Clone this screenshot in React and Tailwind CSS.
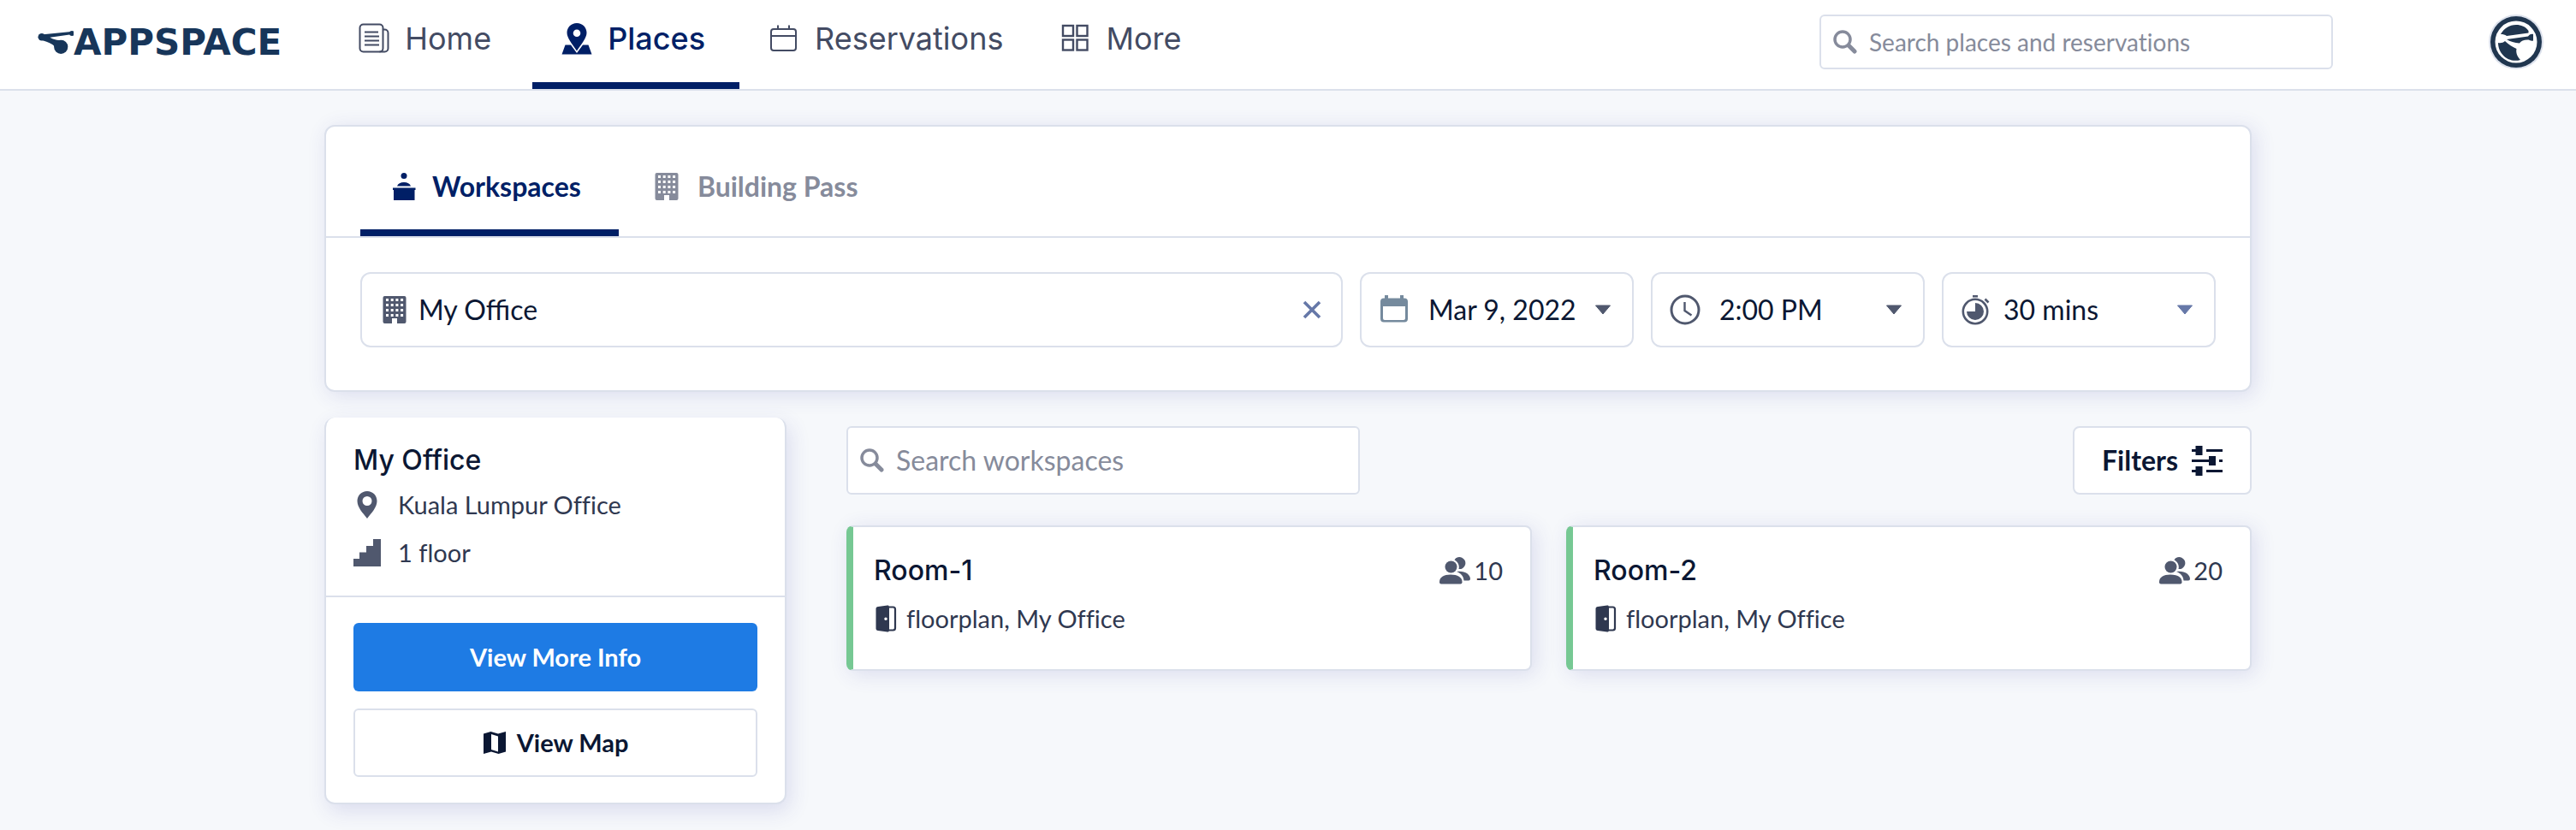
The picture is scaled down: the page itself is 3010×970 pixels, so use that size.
import React from "react";
import { useState } from "react";

const NewsIcon = () => (
  <svg className="w-10 h-10" viewBox="0 0 40 40" fill="none" stroke="currentColor" strokeWidth="2">
    <rect x="3.5" y="3.5" width="27" height="32" rx="4" />
    <path d="M30.5 9.5h2a4 4 0 0 1 4 4v18a4 4 0 0 1-4 4h-6" />
    <path d="M9 12.5h16M9 17.5h17M9 22.5h17M9 27.5h17" />
  </svg>
);

const PlacesIcon = () => (
  <svg className="w-10 h-10" viewBox="0 0 40 40" fill="currentColor">
    <path
      fillRule="evenodd"
      d="M20 2C13.300 2 8.500 7 8.500 13.300 8.500 19 14 26 20 34.500 26 26 31.500 19 31.500 13.300 31.500 7 26.700 2 20 2Zm0 7.500a4.300 4.300 0 1 1 0 8.600 4.300 4.300 0 0 1 0-8.600Z"
    />
    <path d="M6.500 27.500h6.500L20 37l7-9.500h6.500L37.500 38.500h-35Z" />
  </svg>
);

const CalendarIcon = () => (
  <svg className="w-10 h-10" viewBox="0 0 40 40" fill="none" stroke="currentColor" strokeWidth="2">
    <rect x="5" y="9" width="29" height="25" rx="3" />
    <path d="M5 17h29M13 4.500v5M26 4.500v5" />
  </svg>
);

const GridIcon = () => (
  <svg className="w-10 h-10" viewBox="0 0 40 40" fill="none" stroke="currentColor" strokeWidth="2.400">
    <rect x="6" y="5" width="12" height="12" />
    <rect x="22.500" y="5" width="12" height="12" />
    <rect x="6" y="21.500" width="12" height="12" />
    <rect x="22.500" y="21.500" width="12" height="12" />
  </svg>
);

const SearchIcon = () => (
  <svg className="w-7 h-7 shrink-0" viewBox="0 0 28 28" fill="none" stroke="currentColor">
    <circle cx="11" cy="11" r="9" strokeWidth="3.500" />
    <path d="m18.500 18.500 6.500 6.500" strokeWidth="5" strokeLinecap="round" />
  </svg>
);

const DeskIcon = () => (
  <svg className="w-8 h-8" viewBox="0 0 32 32" fill="currentColor">
    <circle cx="15" cy="3.500" r="3.500" />
    <path d="M7 15.500c1-3 4-4.500 8-4.500s7 1.500 8 4.500ZM2 17.500h26.500V20H27.500v12H3V20H2Z" />
  </svg>
);

const BuildingIcon = () => (
  <svg className="w-8 h-8" viewBox="0 0 32 32" fill="currentColor">
    <path
      fillRule="evenodd"
      d="M4.500 0h23a2 2 0 0 1 2 2v28a2 2 0 0 1-2 2h-8.500v-6h-6v6h-8.500a2 2 0 0 1-2-2V2a2 2 0 0 1 2-2ZM6 3v3h3V3Zm5.700 0v3h3V3Zm5.700 0v3h3V3Zm5.700 0v3h3V3ZM6 9v3h3V9Zm5.700 0v3h3V9Zm5.700 0v3h3V9Zm5.700 0v3h3V9ZM6 15v3h3v-3Zm5.700 0v3h3v-3Zm5.700 0v3h3v-3Zm5.700 0v3h3v-3ZM6 21v3h3v-3Zm5.700 0v3h3v-3Zm5.700 0v3h3v-3Zm5.700 0v3h3v-3Z"
    />
  </svg>
);

const DateIcon = () => (
  <svg className="w-9 h-9" viewBox="0 0 36 36" fill="currentColor">
    <path
      fillRule="evenodd"
      d="M7 1h4v3.500h14V1h4v3.500h1a4 4 0 0 1 4 4v20a4 4 0 0 1-4 4H6a4 4 0 0 1-4-4v-20a4 4 0 0 1 4-4h1Zm-2 13v14a2 2 0 0 0 2 2h22a2 2 0 0 0 2-2V14Z"
    />
  </svg>
);

const ClockIcon = () => (
  <svg className="w-9 h-9" viewBox="0 0 36 36" fill="none" stroke="currentColor">
    <circle cx="18" cy="18" r="16" strokeWidth="3" />
    <path d="M17.500 9v10l8 5.500" strokeWidth="2.400" />
  </svg>
);

const StopwatchIcon = () => (
  <svg className="w-9 h-9" viewBox="0 0 36 36" fill="none" stroke="currentColor">
    <circle cx="17" cy="20" r="14.200" strokeWidth="2.600" />
    <path d="M14 2.200h6M28.500 5.500l4 4" strokeWidth="2.600" />
    <path d="M17 10a10 10 0 1 1-10 10h10Z" fill="currentColor" stroke="none" />
  </svg>
);

const PinIcon = () => (
  <svg className="w-8 h-8" viewBox="0 0 32 32" fill="currentColor">
    <path
      fillRule="evenodd"
      d="M16 0C9.500 0 4.500 5 4.500 11.500 4.500 19 11 25.500 16 32c5-6.500 11.500-13 11.500-20.500C27.500 5 22.500 0 16 0Zm0 6a5.500 5.500 0 1 1 0 11 5.500 5.500 0 0 1 0-11Z"
    />
  </svg>
);

const StairsIcon = () => (
  <svg className="w-8 h-8" viewBox="0 0 32 32" fill="currentColor">
    <path d="M0 32v-9h7v-7.500h8V8h8V0h9v32Z" />
  </svg>
);

const MapIcon = () => (
  <svg className="w-7 h-7" viewBox="0 0 28 28" fill="currentColor">
    <path
      fillRule="evenodd"
      d="M9.500 1 18 3.500 27 1v23.500L18.500 27 10 24.500 1 27V3.500Zm.5 3v18l8 2.500v-18Z"
    />
  </svg>
);

const SlidersIcon = () => (
  <svg className="w-9 h-9" viewBox="0 0 36 36" fill="none" stroke="currentColor">
    <path d="M0 6.500h8M17 6.500h19M0 18.500h20M32 18.500h4M0 30.500h8M17 30.500h19" strokeWidth="3" />
    <path d="M8.500 1v11M24 13v11M8.500 25v11" strokeWidth="8" />
  </svg>
);

const PeopleIcon = () => (
  <svg className="w-9 h-8" viewBox="0 0 36 32" fill="currentColor">
    <circle cx="13.500" cy="11.500" r="7" />
    <path d="M0 29c0-5.500 5-8.500 13-8.500S26.500 23.500 26.500 29v.5a2 2 0 0 1-2 2H2a2 2 0 0 1-2-2Z" />
    <path d="M17.500 3.200A7 7 0 1 1 22.500 14c1-4-.5-8.500-5-10.800ZM20 17c9-1.500 16 3 16 8.500a2 2 0 0 1-2 2h-5.500c-.5-5.500-3.500-8.500-8.500-10.500Z" />
  </svg>
);

const DoorIcon = () => (
  <svg className="w-7 h-8" viewBox="0 0 28 32" fill="currentColor">
    <path
      fillRule="evenodd"
      d="M5 2 16 .5c1.500 0 2 .5 2 2V29.500c0 1.500-.5 2-2 2L5 30c-1.500 0-2.500-1-2.500-2.500v-23C2.500 3 3.500 2 5 2Zm9 12.500a1.500 1.500 0 1 0 0 3.500 1.500 1.500 0 0 0 0-3.500Z"
    />
    <path d="M18 2.500h4.500a2.500 2.500 0 0 1 2.500 2.500v22a2.500 2.500 0 0 1-2.500 2.500H18" fill="none" stroke="currentColor" strokeWidth="2.200" />
  </svg>
);

const Caret = ({ className }) => (
  <svg className={className} viewBox="0 0 20 12" fill="currentColor">
    <path d="M1.500 1h17L10 11Z" stroke="currentColor" strokeWidth="1" strokeLinejoin="round" />
  </svg>
);

const Logo = () => (
  <a href="#" className="flex items-center text-[#17365a]">
    <svg className="w-[42px] h-8" viewBox="0 0 44 32" fill="currentColor">
      <circle cx="5" cy="9" r="4.500" />
      <circle cx="42" cy="4.500" r="3.200" />
      <circle cx="28.500" cy="21" r="8.500" />
      <path d="M4 6 41 2.500v3.400L15 9.500c4 2.500 8 3.500 16 3.500l-6 14c-3-3-3-6-7-9S8 14 3 12Z" />
    </svg>
    <span className="font-['DejaVu_Sans',sans-serif] text-[42px] leading-none font-bold">APPSPACE</span>
  </a>
);

const Avatar = () => (
  <button className="w-16 h-16 shrink-0" aria-label="Profile">
    <svg viewBox="0 0 64 64">
      <circle cx="32" cy="32" r="32" fill="#dce1ec" />
      <circle cx="32" cy="32" r="30" fill="#20364f" />
      <circle cx="32" cy="32" r="24.500" fill="#fff" />
      <path d="M14 23c4-7 10-11 18-11 6 0 11 2 14.500 7v2.500L21 25c-2-1.500-4-2-7-2Z" fill="#20364f" />
      <path d="M21 29 46 25.500c2-2.500 4-3 6-2.500v7.500c-2 .5-4 0-5-1-5-.5-9 1-11 4-6-.5-11-2-15-4.500Z" fill="#20364f" />
      <path d="M11 33c3 .5 6 0 8-2 4 4 9 7 13.500 9-1 5 1 9 4.500 13-14 4-26-7-26-20Z" fill="#20364f" />
    </svg>
  </button>
);

const navItems = [
  { name: "Home", icon: <NewsIcon /> },
  { name: "Places", icon: <PlacesIcon />, active: true },
  { name: "Reservations", icon: <CalendarIcon /> },
  { name: "More", icon: <GridIcon /> },
];

const rooms = [
  { name: "Room-1", seats: 10, place: "floorplan, My Office" },
  { name: "Room-2", seats: 20, place: "floorplan, My Office" },
];

const Header = () => {
  return (
    <header className="flex h-[106px] bg-white border-b-2 border-[#dbe0eb] pl-11 pr-[38px]">
      <div className="flex items-center pb-1">
        <Logo />
      </div>
      <nav className="flex ml-14 font-['Inter',sans-serif] text-[36px]">
        {navItems.map((item) => (
          <a
            key={item.name}
            href="#"
            className={
              item.active
                ? "flex items-center gap-4 ml-4 pl-8 pr-10 pb-1.5 border-b-8 border-[#001f66] text-[#001f66] font-medium"
                : "flex items-center gap-4 pl-8 pr-8 pb-1.5 border-b-8 border-transparent text-[#434b63]"
            }
          >
            {item.icon}
            {item.name}
          </a>
        ))}
      </nav>
      <label className="flex items-center gap-3.5 w-[600px] h-16 mt-[17px] ml-auto mr-[182px] px-3.5 border-2 border-[#dbe0eb] rounded-md text-[#868b9b]">
        <SearchIcon />
        <input
          className="w-full text-[28px] outline-none placeholder:text-[#868b9b] [font-variant-ligatures:none]"
          placeholder="Search places and reservations"
          aria-label="Search places and reservations"
        />
      </label>
      <div className="mt-[17px]">
        <Avatar />
      </div>
    </header>
  );
};

const SearchPanel = () => {
  const [office, setOffice] = useState("My Office");
  const [time, setTime] = useState("2:00 PM");
  const [duration, setDuration] = useState("30 mins");

  return (
    <section className="bg-white border-2 border-[#dbe0eb] rounded-xl shadow-[4px_4px_24px_rgba(60,60,160,0.14)]">
      <div className="flex px-10 border-b-2 border-[#dbe0eb] text-[32px] font-bold">
        <button className="flex items-center gap-4 h-32 pl-9 pr-11 pt-5 border-b-8 border-[#001f66] text-[#001f66]">
          <DeskIcon />
          Workspaces
        </button>
        <button className="flex items-center gap-5 h-32 pl-10 pr-10 pt-5 border-b-8 border-transparent text-[#868b9b]">
          <BuildingIcon />
          Building Pass
        </button>
      </div>
      <div className="flex gap-5 px-10 pt-10 pb-[50px] text-[32px] text-[#0b1733]">
        <div className="flex flex-1 items-center gap-3 h-[88px] px-[22px] border-2 border-[#dbe0eb] rounded-xl">
          <span className="text-[#50586e]">
            <BuildingIcon />
          </span>
          <input
            className="flex-1 outline-none"
            value={office}
            onChange={(e) => setOffice(e.target.value)}
            aria-label="Office"
          />
          <button className="text-[#6678a8]" aria-label="Clear" onClick={() => setOffice("")}>
            <svg className="w-6 h-6" viewBox="0 0 24 24" fill="none" stroke="currentColor" strokeWidth="3.600">
              <path d="m3 3 18 18M21 3 3 21" />
            </svg>
          </button>
        </div>
        <button className="flex items-center w-80 h-[88px] pl-5 pr-6 border-2 border-[#dbe0eb] rounded-xl">
          <span className="text-[#758a9d]">
            <DateIcon />
          </span>
          <span className="ml-[22px]">Mar 9, 2022</span>
          <Caret className="w-5 h-3 ml-auto text-[#50586e]" />
        </button>
        <label className="flex items-center w-80 h-[88px] pl-5 pr-6 border-2 border-[#dbe0eb] rounded-xl">
          <span className="text-[#50586e]">
            <ClockIcon />
          </span>
          <select
            className="flex-1 ml-[22px] appearance-none outline-none"
            value={time}
            onChange={(e) => setTime(e.target.value)}
            aria-label="Time"
          >
            <option>2:00 PM</option>
            <option>2:30 PM</option>
          </select>
          <Caret className="w-5 h-3 text-[#50586e]" />
        </label>
        <label className="flex items-center w-80 h-[88px] pl-5 pr-6 border-2 border-[#dbe0eb] rounded-xl">
          <span className="text-[#50586e]">
            <StopwatchIcon />
          </span>
          <select
            className="flex-1 ml-3.5 appearance-none outline-none"
            value={duration}
            onChange={(e) => setDuration(e.target.value)}
            aria-label="Duration"
          >
            <option>30 mins</option>
            <option>60 mins</option>
          </select>
          <Caret className="w-5 h-3 text-[#6678a8]" />
        </label>
      </div>
    </section>
  );
};

const OfficeCard = () => {
  return (
    <aside className="w-[540px] shrink-0 bg-white border-2 border-t-0 border-[#dbe0eb] rounded-xl shadow-[4px_8px_24px_rgba(60,60,160,0.14)] [font-variant-ligatures:none]">
      <div className="px-8 pt-[26px] pb-[22px] text-[29px] text-[#2f3850]">
        <h2 className="font-['Inter',sans-serif] text-[32px] leading-[48px] font-medium text-[#0b1733]">My Office</h2>
        <p className="flex items-center gap-5 h-14">
          <span className="text-[#50586e]">
            <PinIcon />
          </span>
          Kuala Lumpur Office
        </p>
        <p className="flex items-center gap-5 h-14">
          <span className="text-[#50586e]">
            <StairsIcon />
          </span>
          1 floor
        </p>
      </div>
      <div className="flex flex-col gap-5 px-8 py-[30px] border-t-2 border-[#dbe0eb] text-[29px] font-bold">
        <button className="h-20 rounded-md bg-[#1e7be4] text-white">View More Info</button>
        <button className="flex items-center justify-center gap-3 h-20 rounded-md border-2 border-[#dbe0eb] text-[#0b1733]">
          <MapIcon />
          View Map
        </button>
      </div>
    </aside>
  );
};

const RoomCard = ({ room }) => {
  return (
    <div className="flex-1 h-[170px] pl-6 pr-8 pt-[27px] bg-white border-2 border-l-8 border-[#dbe0eb] border-l-[#76c893] rounded-lg shadow-[4px_4px_24px_rgba(60,60,160,0.14)] text-[29px] text-[#2f3850] [font-variant-ligatures:none]">
      <div className="flex items-center justify-between h-12">
        <h3 className="font-['Inter',sans-serif] text-[32px] font-medium text-[#0b1733]">{room.name}</h3>
        <span className="flex items-center gap-1">
          <span className="text-[#50586e]">
            <PeopleIcon />
          </span>
          {room.seats}
        </span>
      </div>
      <p className="flex items-center gap-2.5 mt-2 h-12">
        <DoorIcon />
        {room.place}
      </p>
    </div>
  );
};

const App = () => {
  return (
    <div className="min-h-screen bg-[#f6f8fb] font-['Lato',sans-serif]">
      <Header />
      <main className="max-w-[2252px] mx-auto pt-10 pb-6">
        <SearchPanel />
        <div className="flex items-start gap-[70px] mt-[30px]">
          <OfficeCard />
          <div className="flex-1 pt-[10px]">
            <div className="flex justify-between">
              <label className="flex items-center gap-3.5 w-[600px] h-20 px-3.5 bg-white border-2 border-[#dbe0eb] rounded-md text-[#868b9b]">
                <SearchIcon />
                <input
                  className="w-full text-[32px] outline-none placeholder:text-[#868b9b]"
                  placeholder="Search workspaces"
                  aria-label="Search workspaces"
                />
              </label>
              <button className="flex items-center gap-4 h-20 px-8 bg-white border-2 border-[#dbe0eb] rounded-lg text-[32px] font-bold text-[#0b1733]">
                Filters
                <SlidersIcon />
              </button>
            </div>
            <div className="flex gap-10 mt-9">
              {rooms.map((room) => (
                <RoomCard key={room.name} room={room} />
              ))}
            </div>
          </div>
        </div>
      </main>
    </div>
  );
};

export default App;
